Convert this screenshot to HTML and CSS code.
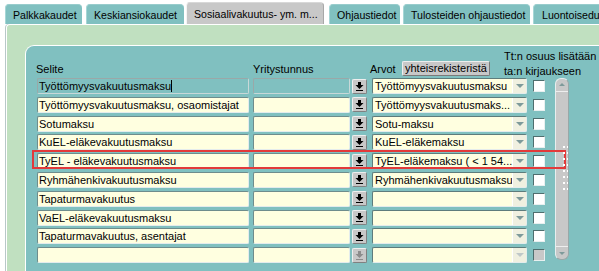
FILE: index.html
```html
<!DOCTYPE html>
<html>
<head>
<meta charset="utf-8">
<link rel="stylesheet" href="styles.css">
</head>
<body>
<div class="screen">
  <div class="tabs">
    <div class="tab t1">Palkkakaudet</div>
    <div class="tab t2">Keskiansiokaudet</div>
    <div class="tab t3 active">Sosiaalivakuutus- ym. m...</div>
    <div class="tab t4">Ohjaustiedot</div>
    <div class="tab t5">Tulosteiden ohjaustiedot</div>
    <div class="tab t6">Luontoisedut</div>
  </div>
  <div class="panel">
    <div class="inner">
      <div class="head">
        <span class="h-selite">Selite</span>
        <span class="h-ytunnus">Yritystunnus</span>
        <span class="h-arvot">Arvot</span>
        <span class="btn-yr">yhteisrekisteristä</span>
        <span class="h-tt">Tt:n osuus lisätään<br>ta:n kirjaukseen</span>
      </div>
      <div class="body">
        <div class="rows">
          <div class="row">
            <div class="field f-selite focus">Työttömyysvakuutusmaksu<span class="caret"></span></div>
            <div class="field f-yt focus"></div>
            <div class="pick"><svg viewBox="0 0 9 9" width="9" height="9"><rect x="3" y="0" width="3" height="3"/><polygon points="0.5,3 8.5,3 4.5,7"/><rect x="1" y="8" width="7" height="1"/></svg></div>
            <div class="sel"><span class="sel-text">Työttömyysvakuutusmaksu</span><span class="arr"></span></div>
            <div class="chk"></div>
          </div>
          <div class="row">
            <div class="field f-selite">Työttömyysvakuutusmaksu, osaomistajat</div>
            <div class="field f-yt"></div>
            <div class="pick"><svg viewBox="0 0 9 9" width="9" height="9"><rect x="3" y="0" width="3" height="3"/><polygon points="0.5,3 8.5,3 4.5,7"/><rect x="1" y="8" width="7" height="1"/></svg></div>
            <div class="sel"><span class="sel-text">Työttömyysvakuutusmaks...</span><span class="arr"></span></div>
            <div class="chk"></div>
          </div>
          <div class="row">
            <div class="field f-selite">Sotumaksu</div>
            <div class="field f-yt"></div>
            <div class="pick"><svg viewBox="0 0 9 9" width="9" height="9"><rect x="3" y="0" width="3" height="3"/><polygon points="0.5,3 8.5,3 4.5,7"/><rect x="1" y="8" width="7" height="1"/></svg></div>
            <div class="sel"><span class="sel-text">Sotu-maksu</span><span class="arr"></span></div>
            <div class="chk"></div>
          </div>
          <div class="row">
            <div class="field f-selite">KuEL-eläkevakuutusmaksu</div>
            <div class="field f-yt"></div>
            <div class="pick"><svg viewBox="0 0 9 9" width="9" height="9"><rect x="3" y="0" width="3" height="3"/><polygon points="0.5,3 8.5,3 4.5,7"/><rect x="1" y="8" width="7" height="1"/></svg></div>
            <div class="sel"><span class="sel-text">KuEL-eläkemaksu</span><span class="arr"></span></div>
            <div class="chk"></div>
          </div>
          <div class="row marked">
            <div class="field f-selite">TyEL - eläkevakuutusmaksu</div>
            <div class="field f-yt"></div>
            <div class="pick"><svg viewBox="0 0 9 9" width="9" height="9"><rect x="3" y="0" width="3" height="3"/><polygon points="0.5,3 8.5,3 4.5,7"/><rect x="1" y="8" width="7" height="1"/></svg></div>
            <div class="sel"><span class="sel-text">TyEL-eläkemaksu ( &lt; 1 54...</span><span class="arr"></span></div>
            <div class="chk"></div>
          </div>
          <div class="row">
            <div class="field f-selite">Ryhmähenkivakuutusmaksu</div>
            <div class="field f-yt"></div>
            <div class="pick"><svg viewBox="0 0 9 9" width="9" height="9"><rect x="3" y="0" width="3" height="3"/><polygon points="0.5,3 8.5,3 4.5,7"/><rect x="1" y="8" width="7" height="1"/></svg></div>
            <div class="sel"><span class="sel-text">Ryhmähenkivakuutusmaksu</span><span class="arr"></span></div>
            <div class="chk"></div>
          </div>
          <div class="row">
            <div class="field f-selite">Tapaturmavakuutus</div>
            <div class="field f-yt"></div>
            <div class="pick"><svg viewBox="0 0 9 9" width="9" height="9"><rect x="3" y="0" width="3" height="3"/><polygon points="0.5,3 8.5,3 4.5,7"/><rect x="1" y="8" width="7" height="1"/></svg></div>
            <div class="sel"><span class="sel-text"></span><span class="arr"></span></div>
            <div class="chk"></div>
          </div>
          <div class="row">
            <div class="field f-selite">VaEL-eläkevakuutusmaksu</div>
            <div class="field f-yt"></div>
            <div class="pick"><svg viewBox="0 0 9 9" width="9" height="9"><rect x="3" y="0" width="3" height="3"/><polygon points="0.5,3 8.5,3 4.5,7"/><rect x="1" y="8" width="7" height="1"/></svg></div>
            <div class="sel"><span class="sel-text"></span><span class="arr"></span></div>
            <div class="chk"></div>
          </div>
          <div class="row">
            <div class="field f-selite">Tapaturmavakuutus, asentajat</div>
            <div class="field f-yt"></div>
            <div class="pick"><svg viewBox="0 0 9 9" width="9" height="9"><rect x="3" y="0" width="3" height="3"/><polygon points="0.5,3 8.5,3 4.5,7"/><rect x="1" y="8" width="7" height="1"/></svg></div>
            <div class="sel"><span class="sel-text"></span><span class="arr"></span></div>
            <div class="chk"></div>
          </div>
          <div class="row disabled">
            <div class="field f-selite"></div>
            <div class="field f-yt"></div>
            <div class="pick"><svg viewBox="0 0 9 9" width="9" height="9"><rect x="3" y="0" width="3" height="3"/><polygon points="0.5,3 8.5,3 4.5,7"/><rect x="1" y="8" width="7" height="1"/></svg></div>
            <div class="sel"><span class="sel-text"></span><span class="arr"></span></div>
            <div class="chk"></div>
          </div>
        </div>
        <div class="scroll">
          <div class="sc-up"></div>
          <div class="sc-track"><span class="grip"></span></div>
          <div class="sc-down"></div>
        </div>
      </div>
    </div>
  </div>
</div>
</body>
</html>
```

FILE: styles.css
```css
html, body {
  margin: 0;
  padding: 0;
  background: #ffffff;
}
.screen {
  width: 599px;
  height: 271px;
  overflow: hidden;
  font-family: "Liberation Sans", Arial, sans-serif;
  font-size: 11px;
  color: #000;
  background: #fff;
}
.tabs {
  display: flex;
  align-items: flex-end;
  height: 24px;
  padding-left: 5px;
  white-space: nowrap;
}
.tab {
  flex: none;
  box-sizing: border-box;
  height: 20px;
  padding: 4px 0 0 7px;
  line-height: 13px;
  font-size: 10.6px;
  background: #80c0c0;
  border-radius: 4px 4px 0 0;
  border-top: 1px solid #98cccc;
  border-left: 1px solid #a6d6d6;
  overflow: hidden;
}
.t1 { width: 77px; padding-left: 7px; }
.t2 { width: 98px; margin-left: 4px; }
.t3 { width: 138px; margin-left: 2px; }
.t4 { width: 71px; margin-left: 5px; }
.t5 { width: 127px; margin-left: 3px; }
.t6 { width: 90px; margin-left: 3px; padding-left: 8px; }
.tab.active {
  height: 22px;
  padding-top: 5px;
  background: #c8c8c8;
  border-top: 1px solid #d8d8d8;
  border-left: 1px solid #f4f4f4;
  border-right: 1px solid #a8a8a8;
}
.panel {
  box-sizing: border-box;
  margin-left: 6px;
  height: 247px;
  background: #c0e0c0;
  border-top: 1px solid #ffffff;
  border-left: 1px solid #ffffff;
  box-shadow: -1px 0 0 #b8c8c8;
  border-top-left-radius: 4px;
  padding: 20px 0 0 18px;
}
.inner {
  box-sizing: border-box;
  height: 226px;
  margin-right: -6px;
  background: #80c0c0;
  border-top: 1px solid #ffffff;
  border-left: 1px solid #ffffff;
  border-top-left-radius: 9px;
  padding-left: 11px;
}
.head {
  display: flex;
  align-items: flex-end;
  height: 32px;
  box-sizing: border-box;
  padding-bottom: 1px;
  white-space: nowrap;
  line-height: 15px;
}
.h-selite { width: 217px; margin-left: -1px; }
.h-ytunnus { width: 117px; }
.h-arvot { width: 32px; }
.btn-yr {
  box-sizing: border-box;
  width: 88px;
  height: 15px;
  margin-bottom: 1px;
  line-height: 13px;
  padding-left: 2px;
  background: #c8c8c8;
  border: 1px solid;
  border-color: #eeeeee #7a7a7a #7a7a7a #eeeeee;
  border-radius: 2px;
}
.h-tt {
  align-self: flex-start;
  margin-top: 3px;
  margin-left: 14px;
}
.body {
  display: flex;
  align-items: flex-start;
}
.rows {
  display: flex;
  flex-direction: column;
  gap: 2.8px;
  width: 508px;
}
.row {
  display: flex;
  align-items: center;
  height: 16px;
  position: relative;
}
.field {
  box-sizing: border-box;
  height: 16px;
  line-height: 14px;
  padding-left: 1px;
  background: #ffffe0;
  border: 1px solid;
  border-color: #6e8c8c #e4ecec #e4ecec #6e8c8c;
  border-radius: 2px;
  white-space: nowrap;
  overflow: hidden;
}
.field.focus {
  background: #80c0c0;
  border-color: #9aa8a8 #c8d8d8 #c8d8d8 #9aa8a8;
}
.caret {
  display: inline-block;
  width: 1px;
  height: 12px;
  background: #000;
  vertical-align: -2px;
}
.f-selite { width: 212px; }
.f-yt { width: 97px; margin-left: 4px; }
.pick {
  box-sizing: border-box;
  width: 15px;
  height: 15px;
  margin-left: 2px;
  display: flex;
  align-items: center;
  justify-content: center;
  background: #c8c8c8;
  border: 1px solid;
  border-color: #eeeeee #808080 #808080 #eeeeee;
  border-radius: 2px;
}
.pick svg { fill: #000; }
.sel {
  box-sizing: border-box;
  display: flex;
  width: 155px;
  height: 16px;
  margin-left: 5px;
  background: #ffffe0;
  border: 1px solid;
  border-color: #5e7c7c #e4ecec #e4ecec #5e7c7c;
  border-radius: 2px;
}
.sel-text {
  flex: 1;
  padding-left: 2px;
  line-height: 14px;
  white-space: nowrap;
  overflow: hidden;
}
.arr {
  flex: none;
  width: 13px;
  position: relative;
  background: #f0f0e0;
  border-left: 1px solid #ffffff;
}
.arr::after {
  content: "";
  position: absolute;
  left: 3px;
  top: 5px;
  border-left: 4px solid transparent;
  border-right: 4px solid transparent;
  border-top: 4px solid #7e9a9a;
}
.chk {
  box-sizing: border-box;
  width: 12px;
  height: 12px;
  margin-left: 6px;
  background: #ffffff;
  border: 1px solid;
  border-color: #4e6e6e #e8f0f0 #e8f0f0 #4e6e6e;
}
.row.disabled .pick svg { fill: #8c8c8c; }
.row.disabled .arr::after { border-top-color: #c0c8c8; }
.row.disabled .chk { background: #c8c8c8; }
.row.marked::after {
  content: "";
  position: absolute;
  left: -5px;
  top: -3px;
  width: 534px;
  height: 19px;
  box-sizing: border-box;
  border: 2px solid #e23a3a;
}
.scroll {
  box-sizing: border-box;
  width: 14px;
  height: 182px;
  margin-left: 10px;
  display: flex;
  flex-direction: column;
  background: #c8c8c8;
  border: 1px solid;
  border-color: #e8eeee #98a8a8 #98a8a8 #e8eeee;
  border-radius: 6px;
}
.sc-up, .sc-down {
  height: 12px;
  position: relative;
  flex: none;
}
.sc-up { border-bottom: 1px solid #eeeeee; }
.sc-down { border-top: 1px solid #eeeeee; }
.sc-up::after, .sc-down::after {
  content: "";
  position: absolute;
  left: 3px;
  border-left: 3.5px solid transparent;
  border-right: 3.5px solid transparent;
}
.sc-up::after { top: 4px; border-bottom: 3px solid #7e9a9a; }
.sc-down::after { top: 5px; border-top: 3px solid #7e9a9a; }
.sc-track {
  flex: 1;
  position: relative;
}
.grip {
  position: absolute;
  left: 6px;
  top: 52px;
  width: 6px;
  height: 46px;
  background-image: radial-gradient(circle, #ffffff 0.8px, transparent 1px);
  background-size: 4px 6px;
}
```
